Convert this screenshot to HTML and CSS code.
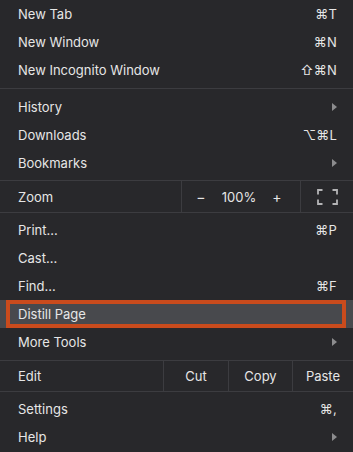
FILE: index.html
```html
<!DOCTYPE html>
<html>
<head>
<meta charset="utf-8">
<link rel="stylesheet" href="styles.css">
</head>
<body>
<div class="menu">
  <div class="group">
    <div class="item"><span class="label">New Tab</span><span class="key">⌘T</span></div>
    <div class="item"><span class="label">New Window</span><span class="key">⌘N</span></div>
    <div class="item"><span class="label">New Incognito Window</span><span class="key">⇧⌘N</span></div>
  </div>
  <div class="sep"></div>
  <div class="group">
    <div class="item"><span class="label">History</span><span class="arrow"></span></div>
    <div class="item"><span class="label">Downloads</span><span class="key">⌥⌘L</span></div>
    <div class="item"><span class="label">Bookmarks</span><span class="arrow"></span></div>
  </div>
  <div class="zoom-row">
    <span class="cell-label">Zoom</span>
    <div class="zoom-ctrl">
      <span class="zbtn">−</span>
      <span class="zval">100%</span>
      <span class="zbtn">+</span>
    </div>
    <div class="fs">
      <svg width="21" height="16" viewBox="0 0 21 16" fill="none" stroke="#b4b4b6" stroke-width="1.8">
        <path d="M1 5.5V1H5.5M15.5 1H20V5.5M20 10.5V15H15.5M5.5 15H1V10.5"/>
      </svg>
    </div>
  </div>
  <div class="group">
    <div class="item"><span class="label">Print...</span><span class="key">⌘P</span></div>
    <div class="item"><span class="label">Cast...</span></div>
    <div class="item"><span class="label">Find...</span><span class="key">⌘F</span></div>
    <div class="item active"><span class="label">Distill Page</span></div>
    <div class="item"><span class="label">More Tools</span><span class="arrow"></span></div>
  </div>
  <div class="edit-row">
    <span class="cell-label">Edit</span>
    <span class="ebtn">Cut</span>
    <span class="ebtn">Copy</span>
    <span class="ebtn">Paste</span>
  </div>
  <div class="group">
    <div class="item"><span class="label">Settings</span><span class="key">⌘,</span></div>
    <div class="item"><span class="label">Help</span><span class="arrow"></span></div>
  </div>
</div>
</body>
</html>
```

FILE: styles.css
```css
html, body {
  margin: 0;
  padding: 0;
  background: #28282b;
}
.menu {
  width: 353px;
  height: 452px;
  background: #28282b;
  color: #e6e6e6;
  font-family: "Inter", "DejaVu Sans", sans-serif;
  font-size: 13px;
  overflow: hidden;
}
.item {
  height: 28px;
  display: flex;
  align-items: center;
  justify-content: space-between;
  padding: 0 16px 0 18px;
  position: relative;
}
.key {
  color: #e6e6e6;
  letter-spacing: 0.2px;
}
.arrow {
  width: 0;
  height: 0;
  border-top: 4px solid transparent;
  border-bottom: 4px solid transparent;
  border-left: 5px solid #8c8c8e;
}
.sep {
  height: 1px;
  background: #3c3c40;
  margin: 4px 0;
}
.zoom-row {
  display: grid;
  grid-template-columns: 181px 119px 1fr;
  height: 31px;
  border-top: 1px solid #3c3c40;
  border-bottom: 1px solid #3c3c40;
  margin: 3px 0;
}
.cell-label {
  display: flex;
  align-items: center;
  padding-left: 18px;
}
.zoom-ctrl {
  border-left: 1px solid #3c3c40;
  display: flex;
  align-items: center;
  justify-content: space-between;
  padding: 0 18px 0 14px;
}
.zbtn {
  width: 10px;
  text-align: center;
  font-size: 14px;
}
.fs {
  border-left: 1px solid #3c3c40;
  display: flex;
  align-items: center;
  justify-content: center;
}
.edit-row {
  display: grid;
  grid-template-columns: 163px 65px 64px 1fr;
  height: 30px;
  border-top: 1px solid #3c3c40;
  border-bottom: 1px solid #3c3c40;
  margin: 4px 0 3px;
}
.ebtn {
  border-left: 1px solid #3c3c40;
  display: flex;
  align-items: center;
  justify-content: center;
}
.item.active {
  background: #48494d;
}
.item.active::after {
  content: "";
  position: absolute;
  left: 6px;
  right: 7px;
  top: 0;
  bottom: 0;
  border: 4px solid #c94b1d;
}
```
